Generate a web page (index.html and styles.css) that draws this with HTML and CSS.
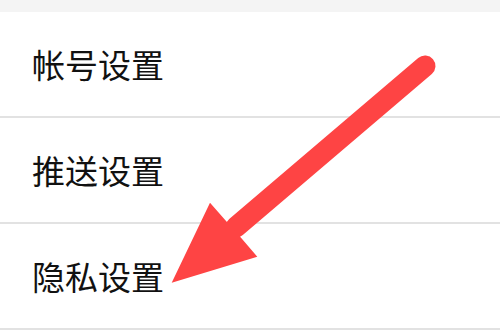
FILE: index.html
```html
<!DOCTYPE html>
<html lang="zh-CN">
<head>
<meta charset="utf-8">
<title>设置</title>
<link rel="stylesheet" href="styles.css">
</head>
<body>
<div class="page">
  <div class="topbar"></div>
  <ul class="list">
    <li class="row">帐号设置</li>
    <li class="row">推送设置</li>
    <li class="row">隐私设置</li>
  </ul>
  <svg class="arrow" width="500" height="334" viewBox="0 0 500 334" xmlns="http://www.w3.org/2000/svg">
    <line x1="425" y1="66" x2="236" y2="227" stroke="#fe4444" stroke-width="21" stroke-linecap="round"/>
    <polygon points="171.7,282.7 210,202.7 226.7,221.7 241,237.7 257.3,256.7" fill="#fe4444"/>
  </svg>
</div>
</body>
</html>
```
FILE: styles.css
```css
html, body {
  margin: 0;
  padding: 0;
  background: #ffffff;
}
.page {
  position: relative;
  width: 500px;
  height: 334px;
  overflow: hidden;
  background: #ffffff;
}
.topbar {
  height: 12px;
  background: #f4f4f4;
}
.list {
  list-style: none;
  margin: 0;
  padding: 0;
}
.row {
  height: 104px;
  display: flex;
  align-items: center;
  padding-left: 32px;
  border-bottom: 2px solid #e2e2e2;
  font-family: "Noto Sans CJK SC", "Noto Sans", sans-serif;
  font-size: 33px;
  color: #111111;
  line-height: 1;
}
.arrow {
  position: absolute;
  left: 0;
  top: 0;
}
```
